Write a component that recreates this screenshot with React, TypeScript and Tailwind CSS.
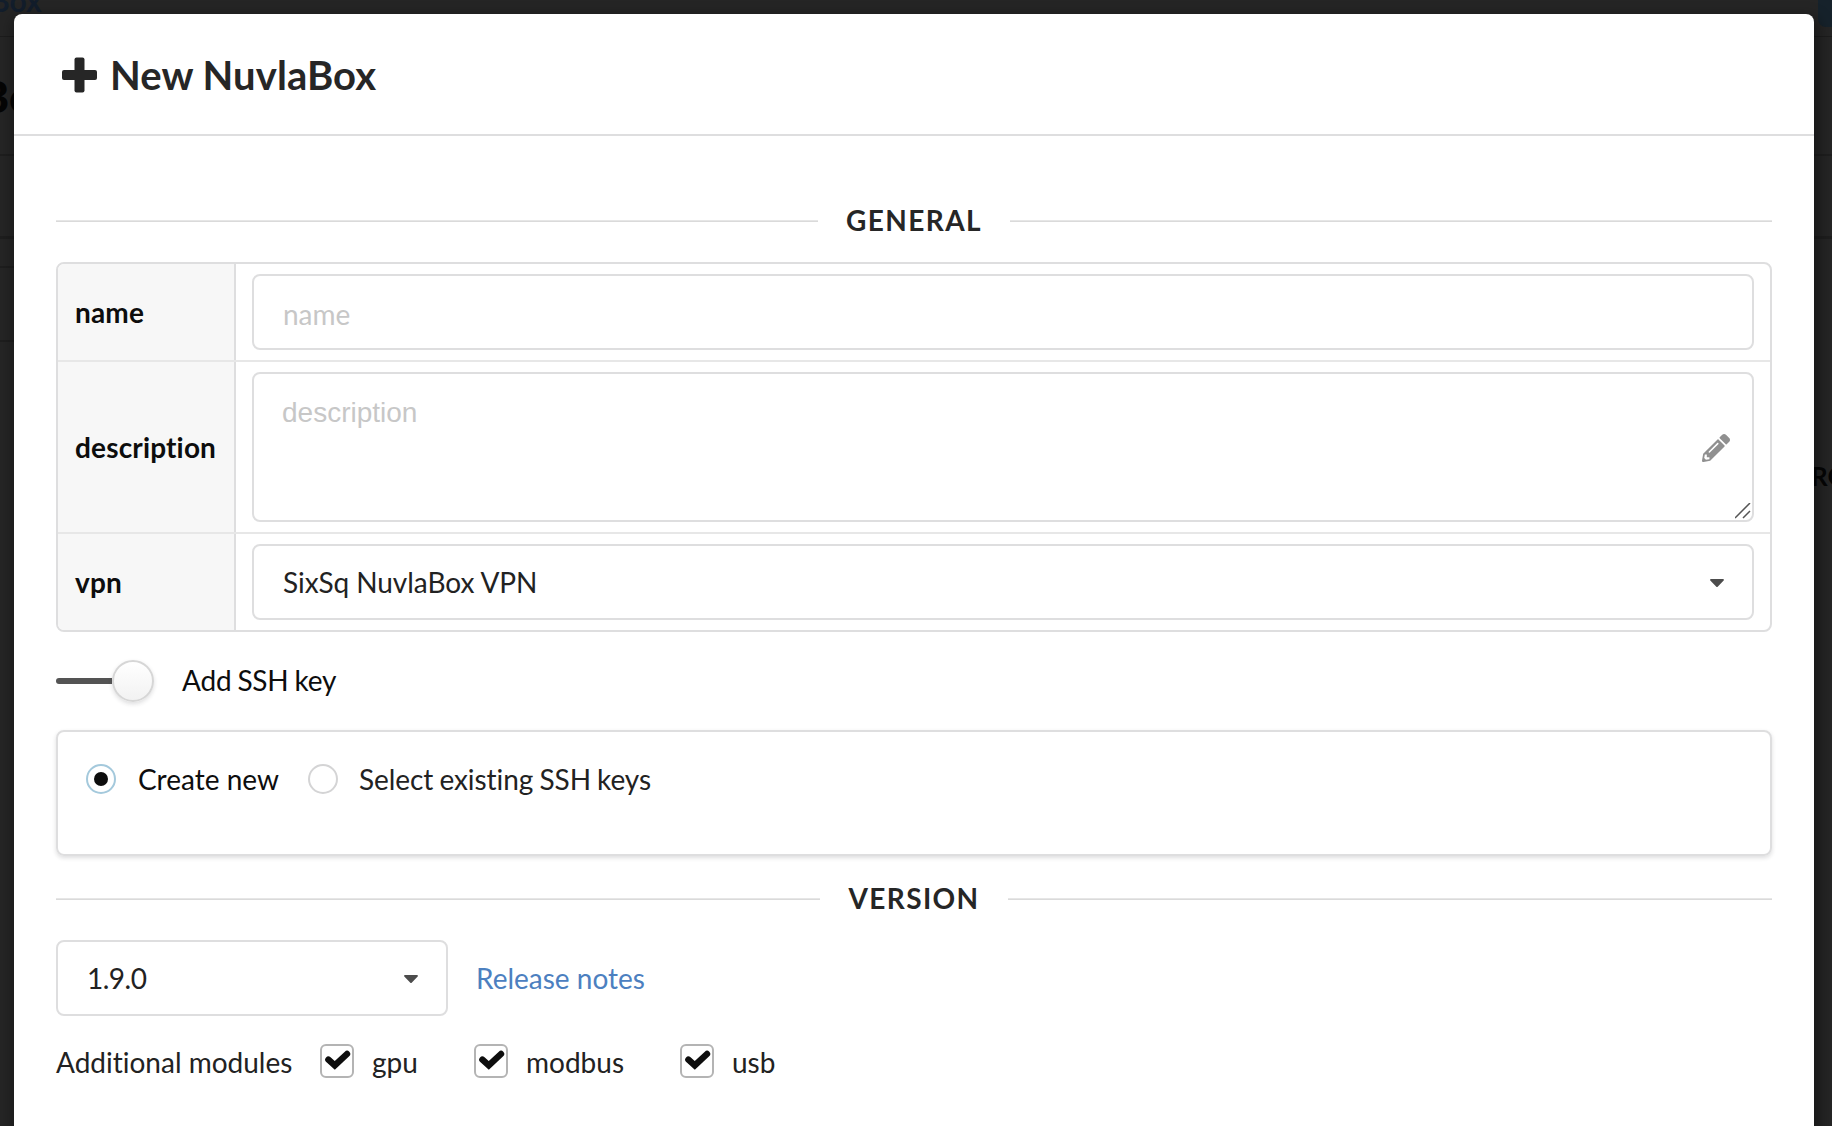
import { FaCaretDown, FaPencilAlt } from "react-icons/fa";

function Rule() {
  return <div className="mt-[2px] h-[2px] flex-1 border-t border-[#e6e6e6] bg-[#dadada]" />;
}

function Divider({ label, className }: { label: string; className: string }) {
  return (
    <div className={`flex items-center gap-7 ${className}`}>
      <Rule />
      <h4 className="mt-[-1px] text-[28px] leading-[36px] font-bold tracking-[1.4px] text-[#262626] uppercase">
        {label}
      </h4>
      <Rule />
    </div>
  );
}

const box = "rounded-[8px] border-2 border-[#dededf] bg-white";
const labelCell =
  "flex w-[178px] items-center border-r-2 border-[#dededf] bg-[#f7f7f7] pb-[1px] pl-[17px] font-bold tracking-[0.16px] text-[#0d0d0d]";

function Module({ label, className }: { label: string; className: string }) {
  return (
    <div className={`flex items-center ${className}`}>
      <div className="mt-[-2px] h-[34px] w-[34px] shrink-0 rounded-[6px] border-2 border-[#b4b4b4]">
        <svg className="h-[30px] w-[30px]" viewBox="2 2 30 30" fill="none" stroke="#0d0d0d" strokeWidth="6.4">
          <path d="M8.4 15.6 14.8 21.4 27 10" strokeLinecap="round" />
        </svg>
      </div>
      <span className="ml-[18px]">{label}</span>
    </div>
  );
}

export default function App() {
  return (
    <div className="relative h-[1126px] w-[1832px] overflow-hidden bg-[#252525] font-['Lato',sans-serif] text-[28px] leading-[40px] text-[#222] [font-variant-ligatures:none]">
      {/* Dimmed page behind the dialog */}
      <div className="absolute inset-x-0 top-[36px] h-px bg-[#1c1c1c]" />
      <div className="absolute inset-x-0 top-[154px] h-[2px] bg-[#1e1e1e]" />
      <div className="absolute inset-x-0 top-[236px] h-[3px] bg-[#1e1e1e]" />
      <div className="absolute top-[266px] left-0 h-[2px] w-4 bg-[#1e1e1e]" />
      <div className="absolute top-[340px] left-0 h-[2px] w-4 bg-[#1e1e1e]" />
      <div className="absolute top-[-20px] left-[-10px] text-[30px] leading-[40px] font-bold text-[#121d2b]">Box</div>
      <div className="absolute top-[70px] left-[-20px] text-[44px] leading-[52px] font-black text-[#050505]">Bo</div>
      <div className="absolute top-[456px] left-[1811px] text-[26px] leading-[40px] font-bold text-[#050505]">RO</div>
      <div className="absolute top-[-10px] left-[1818px] h-[37px] w-10 rounded-[8px] bg-[#16222b]" />

      <div className="relative mt-[14px] ml-[14px] h-[1200px] w-[1800px] rounded-[8px] bg-white shadow-[2px_6px_14px_4px_rgba(0,0,0,0.35)]">
        <header className="flex h-[122px] items-center border-b-2 border-[#dededf] pl-[48px] text-[#262626]">
          <svg className="mt-[2px] h-[36px] w-[35px]" viewBox="0 0 35 36" fill="currentColor">
            <rect x="12.5" y="0.5" width="10" height="35" rx="2" />
            <rect x="0" y="13" width="35" height="10" rx="2" />
          </svg>
          <h1 className="mt-[2px] ml-[13px] text-[40px] leading-[52px] font-bold tracking-[0.08px]">New NuvlaBox</h1>
        </header>

        <main className="px-[42px] pt-[66px]">
          <Divider label="General" className="h-[36px]" />

          <div className="mt-[24px] h-[370px] overflow-hidden rounded-[8px] border-2 border-[#dededf]">
            <div className="flex h-[98px] border-b-2 border-[#e7e7e7]">
              <div className={labelCell}>name</div>
              <div className="flex-1 px-4 pt-[10px]">
                <div className={`flex h-[76px] items-center pt-[3px] pl-[29px] text-[#c7c7c7] ${box}`}>name</div>
              </div>
            </div>
            <div className="flex h-[172px] border-b-2 border-[#e7e7e7]">
              <div className={labelCell}>description</div>
              <div className="flex-1 px-4 pt-[10px]">
                <div className={`relative h-[150px] pt-[19px] pl-[28px] font-['Liberation_Sans',sans-serif] text-[#c7c7c7] ${box}`}>
                  <span>description</span>
                  <FaPencilAlt className="absolute top-[60px] right-[22px] h-[28px] w-[28px] text-[#909090]" />
                  <svg className="absolute right-[1px] bottom-[1px] h-4 w-4" viewBox="0 0 16 16" stroke="#555" strokeWidth="1.5">
                    <path d="M0 15 15 0M8 15l7-7" />
                  </svg>
                </div>
              </div>
            </div>
            <div className="flex h-[96px]">
              <div className={labelCell}>vpn</div>
              <div className="flex-1 px-4 pt-[10px]">
                <div className={`flex h-[76px] items-center justify-between pr-[25px] pl-[29px] ${box}`}>
                  <span className="tracking-[-0.06px]">SixSq NuvlaBox VPN</span>
                  <FaCaretDown className="h-[24px] w-[20px] text-[#4c4c4c]" />
                </div>
              </div>
            </div>
          </div>

          <div className="mt-[28px] flex h-[42px] items-center text-[#0d0d0d]">
            <div className="h-[6px] w-[56px] rounded-l-full bg-[#545454]" />
            <div className="h-[42px] w-[42px] rounded-full border-2 border-[#d6d6d6] bg-linear-to-b from-white to-[#f2f2f2] shadow-[0_2px_4px_rgba(34,36,38,0.15)]" />
            <span className="mt-[-2px] ml-[28px] tracking-[-0.2px] [word-spacing:-1px]">Add SSH key</span>
          </div>

          <div className="mt-[28px] flex h-[126px] rounded-[8px] border-2 border-[#dededf] pt-[28px] pl-[28px] shadow-[0_2px_4px_rgba(34,36,38,0.15)]">
            <div className="flex h-[38px] items-center">
              <div className="flex h-[30px] w-[30px] items-center justify-center rounded-full border-2 border-[#a4c9dc]">
                <div className="h-[14px] w-[14px] rounded-full bg-[#0d0d0d]" />
              </div>
              <span className="ml-[22px] w-[170px] text-[#0d0d0d]">Create new</span>
              <div className="h-[30px] w-[30px] rounded-full border-2 border-[#d4d4d5]" />
              <span className="ml-[21px] tracking-[-0.06px] [word-spacing:-1px]">Select existing SSH keys</span>
            </div>
          </div>

          <Divider label="Version" className="mt-[24px] h-[36px]" />

          <div className="mt-[24px] flex items-center">
            <div className={`flex h-[76px] w-[392px] items-center justify-between pr-[25px] pl-[29px] ${box}`}>
              <span className="tracking-[-0.5px]">1.9.0</span>
              <FaCaretDown className="h-[24px] w-[20px] text-[#4c4c4c]" />
            </div>
            <a className="ml-7 text-[#4c80c0]">Release notes</a>
          </div>

          <div className="mt-[26px] flex h-[40px] items-center">
            <span className="w-[264px]">Additional modules</span>
            <Module label="gpu" className="w-[154px]" />
            <Module label="modbus" className="w-[206px]" />
            <Module label="usb" className="w-[120px]" />
          </div>
        </main>
      </div>
    </div>
  );
}
